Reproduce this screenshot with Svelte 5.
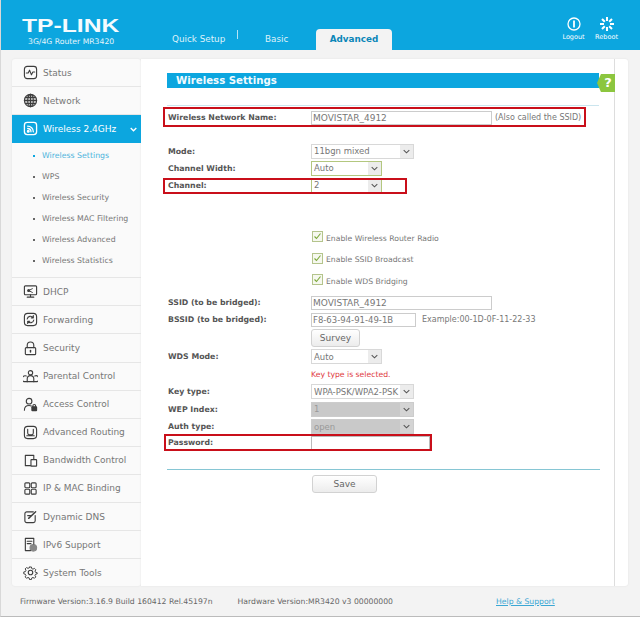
<script>
  const subs = ['Wireless Settings','WPS','Wireless Security','Wireless MAC Filtering','Wireless Advanced','Wireless Statistics'];
  const lower = [
    {n:'DHCP',k:'dhcp'},{n:'Forwarding',k:'fwd'},{n:'Security',k:'sec'},{n:'Parental Control',k:'par'},
    {n:'Access Control',k:'acc'},{n:'Advanced Routing',k:'rou'},{n:'Bandwidth Control',k:'bw'},
    {n:'IP & MAC Binding',k:'ip'},{n:'Dynamic DNS',k:'dns'},{n:'IPv6 Support',k:'v6'},{n:'System Tools',k:'sys'}
  ];
  const checks = ['Enable Wireless Router Radio','Enable SSID Broadcast','Enable WDS Bridging'];
</script>

{#snippet icon(k)}
  <svg class="ico" viewBox="0 0 16 16" fill="none" stroke="currentColor" stroke-width="1.2" stroke-linecap="round" stroke-linejoin="round">
    {#if k==='status'}
      <rect x="1.5" y="1.5" width="13" height="13" rx="3"/><path d="M3.5 8.5h2l1.5-3 2 5 1.5-3h2"/>
    {:else if k==='net'}
      <circle cx="8" cy="8" r="6.5" fill="#bbb"/><ellipse cx="8" cy="8" rx="3" ry="6.5"/><path d="M1.5 8h13M2.5 4.8h11M2.5 11.2h11M8 1.5v13"/>
    {:else if k==='wifi'}
      <rect x="1.5" y="1.5" width="13" height="13" rx="3" stroke-width="1.4"/><path d="M5 5.5a6 6 0 0 1 6 6M5 8a3.5 3.5 0 0 1 3.5 3.5" stroke-width="1.4"/><circle cx="5.6" cy="10.8" r="1" fill="currentColor"/>
    {:else if k==='dhcp'}
      <rect x="1.5" y="2" width="13" height="9.5" rx="1"/><path d="M8 11.5v2.5M4.5 14h7"/><path d="M6 7l4-2M6 7l4 2" stroke-width="1"/><circle cx="6" cy="7" r="1" fill="currentColor"/>
    {:else if k==='fwd'}
      <rect x="1.5" y="1.5" width="13" height="13" rx="3.5"/><path d="M4.5 7.5a3.5 3.5 0 0 1 6.3-1.5M11.5 8.5a3.5 3.5 0 0 1-6.3 1.5M11 3.8v2.4H8.800M5 12.200V9.800h2.200"/>
    {:else if k==='sec'}
      <path d="M4.500 7V4.500a3.500 3.500 0 0 1 7 0V7"/><rect x="2.500" y="7" width="11" height="7.500" rx="1"/><path d="M8 10v1.800" stroke-width="1.600"/>
    {:else if k==='par'}
      <circle cx="8" cy="4" r="2.300"/><path d="M4.500 13.500v-3a3.500 3.500 0 0 1 7 0v3z"/><path d="M3.500 7.500a2 2 0 0 0-2.500 6h3.500M12.500 7.500a2 2 0 0 1 2.500 6h-3.500"/>
    {:else if k==='acc'}
      <circle cx="6.500" cy="4.500" r="3"/><path d="M1.500 14c0-3 1.500-5 5-5 1 0 1.800.2 2.400.5"/><rect x="9.500" y="10.500" width="5" height="4" rx=".5" fill="currentColor"/><path d="M10.500 10.500v-1a1.500 1.500 0 0 1 3 0v1"/>
    {:else if k==='rou'}
      <rect x="1.500" y="1.500" width="13" height="13" rx="3.500"/><path d="M5 4.500v4a2 2 0 0 0 2 2h2a2 2 0 0 0 2-2v-4M4 11.500h8"/>
    {:else if k==='bw'}
      <path d="M8 13.500H2.500v-11h9v4"/><rect x="8.500" y="7" width="6" height="7" rx=".5"/>
    {:else if k==='ip'}
      <rect x="2" y="2" width="5.200" height="5.200" rx="1"/><rect x="8.800" y="2" width="5.200" height="5.200" rx="1"/><rect x="2" y="8.800" width="5.200" height="5.200" rx="1"/><rect x="8.800" y="8.800" width="5.200" height="5.200" rx="1"/>
    {:else if k==='dns'}
      <path d="M13 7v5.500a2 2 0 0 1-2 2H4a2 2 0 0 1-2-2V5a2 2 0 0 1 2-2h7"/><path d="M6 10l7.500-7" stroke-width="1.500"/><path d="M5 7h3"/>
    {:else if k==='v6'}
      <path d="M8 14.500H2.500v-13h9v6"/><path d="M4.500 4.500h5M4.500 7h4"/><circle cx="11" cy="11.500" r="3.500" fill="currentColor" opacity=".6"/>
    {:else if k==='sys'}
      <circle cx="8" cy="8" r="2.400"/><path d="M6.800 1.200h2.400l.4 2 1.500.7 1.800-1 1.700 1.700-1 1.700.7 1.600 2 .4v1.400l-2 .5-.7 1.500 1 1.800-1.700 1.700-1.800-1-1.500.6-.4 2H6.800l-.4-2-1.500-.6-1.800 1-1.700-1.700 1-1.800-.7-1.500-2-.5V7.300l2-.4.700-1.600-1-1.700 1.700-1.700 1.800 1 1.500-.7z" transform="translate(1.100 1.100) scale(.86)"/>
    {/if}
  </svg>
{/snippet}

{#snippet select(value, cls)}
  <div class="select {cls}"><span class="val">{value}</span><span class="arrow"><svg viewBox="0 0 8 5" width="7" height="5"><path d="M.8.8 4 4l3.200-3.200" fill="none" stroke="#555" stroke-width="1.200"/></svg></span></div>
{/snippet}

<div class="page">
  <header>
    <div class="brand">
      <div class="logo"><span>TP-LINK</span></div>
      <div class="model">3G/4G Router MR3420</div>
    </div>
    <nav>
      <span class="tab qs">Quick Setup</span><i class="sep"></i>
      <span class="tab basic">Basic</span>
      <span class="tab active">Advanced</span>
    </nav>
    <div class="actions">
      <div class="act">
        <svg viewBox="0 0 14 14" width="14" height="14" fill="none" stroke="#fff" stroke-width="1.300"><circle cx="7" cy="7" r="6"/><path d="M7 3.500v7" stroke-width="1.800"/></svg>
        <span>Logout</span>
      </div>
      <div class="act">
        <svg viewBox="0 0 14 14" width="14" height="14" fill="none" stroke="#fff" stroke-width="2"><path d="M7 0v4M7 10v4M0 7h4M10 7h4M2 2l2.800 2.800M9.200 9.200 12 12M12 2 9.200 4.800M4.800 9.200 2 12"/></svg>
        <span>Reboot</span>
      </div>
    </div>
  </header>

  <div class="main">
    <aside>
      <div class="item">{@render icon('status')}Status</div>
      <div class="item">{@render icon('net')}Network</div>
      <div class="item on">{@render icon('wifi')}Wireless 2.4GHz<svg class="chev" viewBox="0 0 8 5" width="7" height="5"><path d="M.8.8 4 4l3.200-3.200" fill="none" stroke="#fff" stroke-width="1.500"/></svg></div>
      <ul>
        {#each subs as s, i}
          <li class:cur={i===0}>{s}</li>
        {/each}
      </ul>
      {#each lower as l}
        <div class="item">{@render icon(l.k)}{l.n}</div>
      {/each}
    </aside>

    <section class="panel">
      <div class="content">
        <div class="title">Wireless Settings</div>
        <div class="help">?</div>
        <div class="rule first"></div>
        <div class="form">
          <div class="row name"><label>Wireless Network Name:</label><div class="input wide">MOVISTAR_4912</div><span class="note">(Also called the SSID)</span></div>
          <div class="row mode"><label>Mode:</label>{@render select('11bgn mixed','w103')}</div>
          <div class="row"><label>Channel Width:</label>{@render select('Auto','w71 green')}</div>
          <div class="row"><label>Channel:</label>{@render select('2','w71 green')}</div>

          <div class="checks">
            {#each checks as c}
              <div class="check"><span class="box"><svg viewBox="0 0 11 11" width="11" height="11"><rect x=".5" y=".5" width="10" height="10" fill="#f6f8ef" stroke="#b4c48c"/><path d="M2.500 5.500l2 2 4-5" fill="none" stroke="#7ba83a" stroke-width="1.100"/></svg></span>{c}</div>
            {/each}
          </div>

          <div class="row"><label>SSID (to be bridged):</label><div class="input wide">MOVISTAR_4912</div></div>
          <div class="row"><label>BSSID (to be bridged):</label><div class="input mid">F8-63-94-91-49-1B</div><span class="note ex">Example:00-1D-0F-11-22-33</span></div>
          <div class="row tall"><label></label><div class="btn survey">Survey</div></div>
          <div class="row tall"><label>WDS Mode:</label>{@render select('Auto','w71 plain')}</div>
          <div class="row"><label></label><span class="err">Key type is selected.</span></div>
          <div class="row"><label>Key type:</label>{@render select('WPA-PSK/WPA2-PSK','w103 clip')}</div>
          <div class="row r18"><label>WEP Index:</label>{@render select('1','w103 dis')}</div>
          <div class="row"><label>Auth type:</label>{@render select('open','w103 dis')}</div>
          <div class="row r15"><label>Password:</label><div class="input pw"></div></div>
        </div>
        <div class="rule second"></div>
        <div class="save-row"><div class="btn save">Save</div></div>

        <i class="mark m1"></i><i class="mark m2"></i><i class="mark m3"></i>
      </div>
      <div class="rail"></div>
    </section>
  </div>

  <footer>
    <span class="fw">Firmware Version:3.16.9 Build 160412 Rel.45197n</span>
    <span class="hw">Hardware Version:MR3420 v3 00000000</span>
    <a href="#top">Help &amp; Support</a>
  </footer>
</div>

<style>
  :global(body) { margin: 0; background: #fff; }
  .page {
    width: 640px; height: 617px; box-sizing: border-box; overflow: hidden;
    background: #f3f3f3; border-bottom: 1px solid #bbb; border-left: 1px solid #d8d8d8;
    font-family: "DejaVu Sans", Verdana, sans-serif; color: #666; font-size: 9px;
    display: flex; flex-direction: column;
  }
  header {
    height: 49.5px; flex: none; background: #0ca6df; display: flex; position: relative;
  }
  .brand { width: 170px; padding: 19px 0 0 21px; box-sizing: border-box; color: #fff; }
  .logo { height: 15px; line-height: 15px; }
  .logo span {
    display: inline-block; font: bold 18px/15px "Liberation Sans", Arial, sans-serif;
    transform: scaleX(1.37); transform-origin: left center; color: #f4fbfe;
  }
  .model { margin-top: 3px; font-size: 7.7px; margin-left: 6px; white-space: nowrap; color: #e6f5fb; }
  nav { display: flex; align-items: flex-end; height: 49.5px; flex: none; width: 222px; }
  .tab { color: #dff2fa; font-size: 8.8px; line-height: 21px; height: 21px; white-space: nowrap; }
  .qs { margin-left: 1px; width: 55px; flex: none; }
  .sep { width: 1px; height: 9px; background: #b7e3f5; margin: 0 0 11px 10px; flex: none; }
  .basic { margin-left: 27px; width: 24px; flex: none; }
  .active {
    margin-left: 27px; width: 76px; flex: none; text-align: center; background: #f3f3f3; color: #0b86b8; font-weight: bold;
    border-radius: 4px 4px 0 0; font-size: 8.8px;
  }
  .actions { display: flex; position: absolute; left: 562px; top: 17px; gap: 12px; }
  .act { display: flex; flex-direction: column; align-items: center; width: 21px; color: #fff; font-size: 6.5px; gap: 2px; }
  .act span { white-space: nowrap; }

  .main { flex: 1; display: flex; padding: 9.5px 0 0 11px; min-height: 0; }
  aside {
    width: 129px; height: 527px; flex: none; background: #fafafa; border-radius: 3px;
    box-shadow: 0 0 2px #e0e0e0; font-size: 9px;
  }
  .item {
    height: 27.1px; border-bottom: 1px solid #e6e6e6; display: flex; align-items: center; color: #777;
    padding-left: 11px; position: relative; white-space: nowrap;
  }
  .item:last-child { border-bottom: 0; }
  .item.on { background: #0ca6df; color: #fff; border-bottom-color: #0ca6df; }
  .ico { width: 15px; height: 15px; margin-right: 5px; color: #3d3d3d; flex: none; }
  .on .ico { color: #fff; }
  .chev { position: absolute; right: 4px; top: 12px; }
  ul { margin: 0; padding: 1.5px 0 6.5px; list-style: none; border-bottom: 1px solid #e6e6e6; font-size: 7.8px; }
  li { height: 21px; line-height: 21px; padding-left: 30px; position: relative; color: #777; white-space: nowrap; }
  li::before { content: ""; position: absolute; left: 21px; top: 10px; width: 2px; height: 2px; background: #666; }
  li.cur { color: #4eb4dc; }
  li.cur::before { background: #0ca6df; }

  .panel { flex: none; display: flex; height: 527px; background: #fff; width: 487px; border-radius: 0 3px 3px 0; box-shadow: 0 0 2px #e0e0e0; }
  .content { position: relative; width: 474px; box-sizing: border-box; padding: 14px 15px 0 26px; border-right: 1px solid #ddd; }
  .title {
    height: 15px; background: #0ca6df; color: #f2fbfe; font-weight: bold; font-size: 10.2px; line-height: 15px; padding-left: 9px;
  }
  .help {
    position: absolute; left: 456px; top: 15px; width: 14px; height: 18px; padding-left: 4px; background: #8cc63f; color: #fff; font-size: 13px;
    line-height: 18px; text-align: center; clip-path: polygon(22% 0, 100% 0, 100% 100%, 22% 100%, 0 50%); box-sizing: content-box;
    font-weight: bold;
  }
  .rule { height: 1px; }
  .rule.first { background: #cbe5ee; margin-top: 16.5px; }
  .rule.second { background: #86c6d4; margin-top: 19px; margin-right: -1px; }
  .form { padding-top: 3px; }
  .row { display: flex; align-items: center; height: 17px; white-space: nowrap; }
  .row.name { height: 18px; margin-bottom: 16px; }
  .row.tall { height: 19px; }
  .row.r18 { height: 18px; }
  .row.r15 { height: 15px; }
  label { width: 144px; flex: none; font-weight: bold; font-size: 7.8px; color: #555; padding-left: 1px; box-sizing: border-box; }
  .input {
    height: 14px; box-sizing: border-box; border: 1px solid #ccc; background: #fff; color: #777; font-size: 9px; line-height: 12px; padding-left: 1px;
  }
  .wide { width: 181px; }
  .mid { width: 105px; font-size: 8.5px; }
  .pw { width: 119px; border-color: #bbb; }
  .note { color: #777; font-size: 8px; margin-left: 3px; }
  .note.ex { margin-left: 6px; }
  .select {
    height: 15px; box-sizing: border-box; border: 1px solid #d8d8d8; display: flex; align-items: center; background: #fff; position: relative; color: #777; font-size: 8.5px; padding-left: 2px; overflow: hidden;
  }
  .val { flex: 1; overflow: hidden; white-space: nowrap; }
  .arrow { width: 13px; height: 100%; background: #ececec; display: flex; align-items: center; justify-content: center; flex: none; }
  .w103 { width: 103px; }
  .w71 { width: 71px; }
  .green { border-color: #b3c77f; }
  .dis { background: #c9c9c9; color: #999; border-color: #ccc; }
  .dis .arrow { background: #d4d4d4; }
  .btn {
    border: 1px solid #d2d2d2; border-radius: 3px; background: linear-gradient(#fff, #ececec); color: #666;
    text-align: center; box-sizing: border-box; font-size: 9px;
  }
  .survey { width: 49px; height: 18px; line-height: 16px; }
  .err { color: #e0393e; font-size: 7.7px; }
  .checks { padding: 34px 0 2px; }
  .check { height: 21.5px; display: flex; align-items: center; padding-left: 145px; color: #777; font-size: 7.7px; white-space: nowrap; }
  .box { width: 11px; height: 11px; margin-right: 3px; display: block; margin-top: -3px; }
  .save-row { padding: 5px 0 0 145px; }
  .save { width: 65px; height: 18px; line-height: 16px; }
  .mark { position: absolute; border: 2px solid #c90f1a; box-sizing: border-box; }
  .m1 { left: 22px; top: 48px; width: 423px; height: 20px; }
  .m2 { left: 22px; top: 119px; width: 244px; height: 16px; }
  .m3 { left: 23px; top: 375px; width: 268px; height: 17px; }
  .rail { width: 13px; }

  footer { flex: none; height: 30px; display: flex; align-items: center; position: relative; font-size: 7.7px; color: #666; padding-left: 19px; white-space: nowrap; }
  .hw { margin-left: 25px; }
  footer a { position: absolute; left: 495px; color: #3ba7d4; }
</style>
